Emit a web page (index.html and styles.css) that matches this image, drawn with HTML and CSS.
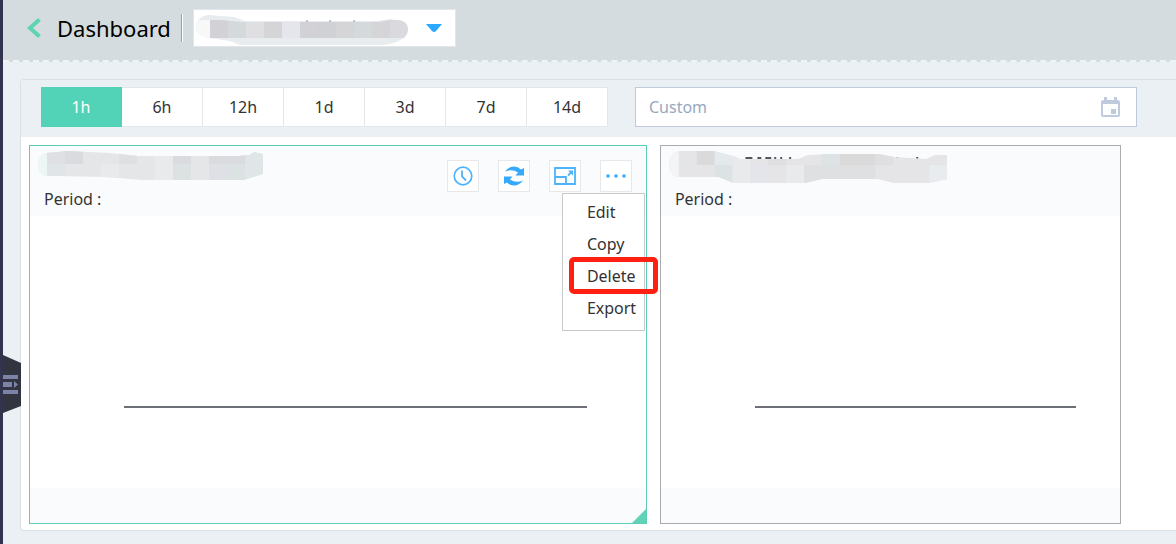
FILE: index.html
```html
<!DOCTYPE html>
<html lang="en">
<head>
<meta charset="utf-8">
<title>Dashboard</title>
<link rel="stylesheet" href="styles.css">
</head>
<body>
<div class="app">
  <aside class="rail">
    <button class="rail-toggle" type="button" aria-label="Expand navigation">
      <svg width="18" height="58" viewBox="0 0 18 58"><path d="M0 0 18 8V51L0 58Z" fill="#32353f"/><path d="M0 20H15V24H0ZM0 27H9V32H0ZM11 26 15 29.500 11 33ZM0 35H15V39H0Z" fill="#7b83a8"/></svg>
    </button>
  </aside>
  <main class="main">
    <header class="header">
      <a class="back" href="#" aria-label="Back"><svg width="14" height="20" viewBox="0 0 14 20"><path d="M12.500 1.500 3 10l9.500 8.500" fill="none" stroke="#5fd3b5" stroke-width="4"/></svg></a>
      <h1 class="title">Dashboard</h1>
      <div class="picker">
        <select class="picker-select" aria-label="Dashboard name"><option></option></select>
        <svg class="picker-mask" width="213" height="31" viewBox="0 0 213 31">
          <defs><clipPath id="m0"><path d="M14 5Q0 5 0 16Q0 28 14 28H177L192 29Q212 27 212 15Q212 6 198 5L184 8H46Z"/></clipPath></defs>
          <path d="M12 1 38 3 49 7H180L195 5Q212 7 212 17Q207 30 185 31H44L34 27 14 24Q0 22 0 13Q0 3 12 1Z" fill="#e8ecee"/>
          <path d="M2 6H14V24Q0 22 0 13Q0 9 2 6Z" fill="#f8f8f9"/>
          <g clip-path="url(#m0)"><path d="M14 6h18v18H14zM104 6h18v18h-18z" fill="#d1d1d6"/><path d="M32 6h18v18H32zM158 6h18v18h-18z" fill="#d4dadc"/><path d="M50 6h18v18H50z" fill="#dfdee1"/><path d="M68 6h18v18H68zM140 6h18v18h-18zM176 6h18v18h-18z" fill="#d5d5d8"/><path d="M86 6h18v18H86z" fill="#e4e6eb"/><path d="M122 6h18v18h-18z" fill="#cfd1d5"/><path d="M194 6h18v18h-18z" fill="#dadade"/></g>
          <path d="M110 7h2M133 7h2M157 7h2" stroke="#8b9199"/>
        </svg>
        <svg class="picker-caret" width="16" height="8" viewBox="0 0 16 8"><path d="M0 0H16L10 7Q8 9 6 7Z" fill="#2ba8ff"/></svg>
      </div>
    </header>
    <section class="panel">
      <div class="toolbar">
        <div class="ranges">
          <button class="range range-active" type="button">1h</button>
          <button class="range" type="button">6h</button>
          <button class="range" type="button">12h</button>
          <button class="range" type="button">1d</button>
          <button class="range" type="button">3d</button>
          <button class="range" type="button">7d</button>
          <button class="range" type="button">14d</button>
        </div>
        <div class="custom">
          <input class="custom-input" type="text" placeholder="Custom" aria-label="Custom">
          <svg width="19" height="20" viewBox="0 0 19 20"><path fill-rule="evenodd" d="M3 0H6V3H13V0H16V3Q19 3 19 5V18Q19 20 17 20H2Q0 20 0 18V5Q0 3 3 3ZM2 7V18H17V7ZM10 12H15V17H10Z" fill="#bfcbdc"/></svg>
        </div>
      </div>
      <div class="cards">
        <article class="card card-selected">
          <div class="card-head">
            <div class="card-info">
              <svg class="mask" width="225" height="30" viewBox="0 0 225 30">
                <defs><clipPath id="m1"><path d="M8 2 30 0 72 2 100 5H200L211 4 216 1 225 3V23L215 26 206 29H104L68 26 20 25H8Q0 23 0 14Q0 5 8 2Z"/></clipPath></defs>
                <g clip-path="url(#m1)"><path d="M0 0h225v30H0z" fill="#e5e6e8"/><path d="M0 0h9v30H0z" fill="#ecf6f4"/><path d="M9 0h18v13H9zM81 0h18v13H81z" fill="#dfe0e3"/><path d="M27 0h18v13H27zM135 0h18v13h-18zM171 0h36v13h-36z" fill="#dadbdf"/><path d="M9 13h18v17H9zM207 0h18v30h-18z" fill="#e0e5e7"/><path d="M63 13h18v17H63zM117 0h18v30h-18z" fill="#e8eaec"/><path d="M135 13h18v17h-18zM189 13h18v17h-18z" fill="#dce1e2"/><path d="M171 13h18v17h-18z" fill="#dfe0e5"/></g>
              </svg>
              <p class="period">Period :</p>
            </div>
            <div class="actions">
              <button class="action" type="button" aria-label="Time"><svg width="20" height="20" viewBox="0 0 20 20" fill="none" stroke="#4db3fb"><circle cx="10" cy="10" r="8.800" stroke-width="1.700"/><path d="M9 4.500V10.500L13 14.500" stroke-width="1.800"/></svg></button>
              <button class="action" type="button" aria-label="Refresh"><svg width="20" height="20" viewBox="0 0 20 20" fill="#35a9fc"><path d="M1 5.500Q5 .5 10 .5Q14 .5 17 3.500L20 2V9.500H11.500L14 6.500Q8 2.500 1 5.500Z"/><path d="M19 14.500Q15 19.500 10 19.500Q6 19.500 3 16.500L0 18V10.500H8.500L6 13.500Q12 17.500 19 14.500Z"/></svg></button>
              <button class="action" type="button" aria-label="Full screen"><svg width="22" height="18" viewBox="0 0 22 18" fill="none" stroke="#4db3fb" stroke-width="1.800"><path d="M1 1H21V17H1ZM1 10H12V17"/><path d="M14 8.500 18 4.500"/><path d="M14 3.500H19V8.500Z" fill="#4db3fb" stroke="none"/></svg></button>
              <div class="more">
                <button class="action" type="button" aria-label="More"><svg width="20" height="4" viewBox="0 0 20 4" fill="#35a9fc"><circle cx="2" cy="2" r="1.800"/><circle cx="10" cy="2" r="1.800"/><circle cx="18" cy="2" r="1.800"/></svg></button>
                <div class="menu">
                  <button class="menu-item" type="button">Edit</button>
                  <button class="menu-item" type="button">Copy</button>
                  <button class="menu-item menu-marked" type="button">Delete</button>
                  <button class="menu-item" type="button">Export</button>
                </div>
              </div>
            </div>
          </div>
          <div class="chart"><div class="axis"></div></div>
          <div class="card-foot"><svg class="grip" width="14" height="14" viewBox="0 0 14 14"><path d="M14 0V14H0Z" fill="#5fd3b5"/></svg></div>
        </article>
        <article class="card">
          <div class="card-head">
            <div class="card-info">
              <svg class="mask" width="278" height="33" viewBox="0 0 280 33">
                <defs><clipPath id="m2"><path d="M10 0H45L68 6 71 8H130L140 4 160 3H212L226 6 259 8 268 4H280V28L262 32H226L210 28H154L137 32H65L50 26H8Q0 23 0 14Q0 2 10 0Z"/></clipPath></defs>
                <path d="M77 7h7M89 7h4M97 7h6M106 7h2M112 7h2M121 7h2M229 7h2M249 7h2" stroke="#555961" stroke-width="2"/>
                <g clip-path="url(#m2)"><path d="M0 0h280v33H0z" fill="#e5e5e7"/><path d="M0 0h10v33H0z" fill="#f3f4f6"/><path d="M28 0h18v14H28zM172 0h36v14h-36z" fill="#dadadb"/><path d="M46 0h18v14H46z" fill="#e4e9ed"/><path d="M46 14h18v19H46zM154 0h18v14h-18z" fill="#dde2e5"/><path d="M64 0h18v33H64zM118 14h18v19h-18z" fill="#e9eaec"/><path d="M100 0h18v14h-18zM208 0h18v14h-18z" fill="#dfdfe2"/><path d="M82 14h18v19H82z" fill="#e4e5ea"/><path d="M136 14h72v19h-72z" fill="#dfe0e1"/><path d="M262 14h18v19h-18z" fill="#e8ecef"/></g>
              </svg>
              <p class="period">Period :</p>
            </div>
          </div>
          <div class="chart"><div class="axis"></div></div>
          <div class="card-foot"></div>
        </article>
      </div>
    </section>
  </main>
</div>
</body>
</html>
```
FILE: styles.css
```css
* { box-sizing: border-box; }
body { margin: 0; background: #eaf0f4; color: #333; font: 16px/24px "Noto Sans", "Open Sans", sans-serif; }
button, input, select { font: inherit; color: inherit; margin: 0; }
button { padding: 0; background: none; border: 0; cursor: pointer; }
svg { display: block; flex: none; }
.app { display: flex; min-height: 100vh; }
.rail { position: relative; flex: none; width: 3px; background: #32334c; }
.rail-toggle { position: absolute; top: 355px; left: 3px; z-index: 2; }
.main { flex: 1; min-width: 0; }
.header { display: flex; align-items: center; height: 62px; padding: 0 24px 4px; background: #d5dcdf; border-bottom: 2px dashed #eef3f6; }
.title { margin: 0 0 0 16px; padding-right: 10px; color: #000; font-size: 22px; font-weight: 400; line-height: 28px; border-right: 1px solid #9a9fa3; box-shadow: 1px 0 #fff; }
.picker { position: relative; width: 263px; height: 38px; margin-left: 11px; }
.picker-select { width: 100%; height: 100%; padding: 0 40px 0 12px; appearance: none; background: #fff; border: 1px solid #e3e6e8; border-radius: 0; }
.picker-mask { position: absolute; top: 5px; left: 3px; pointer-events: none; }
.picker-caret { position: absolute; top: 15px; right: 14px; pointer-events: none; }
.panel { margin: 17px 0 13px 17px; background: #fff; border: solid #d9e0e5; border-width: 1px 0 1px 1px; border-radius: 4px 0 0 4px; }
.toolbar { display: flex; gap: 27px; padding: 7px 39px 10px 20px; background: #eaf0f4; }
.ranges { display: flex; }
.range { width: 81px; height: 40px; background: #fff; border: solid #e4e7e9; border-width: 1px 1px 1px 0; }
.range-active { background: #52d3b7; border-color: #52d3b7; color: #fff; }
.custom { display: flex; flex: 1; align-items: center; min-width: 120px; height: 40px; padding: 0 16px 0 13px; background: #fff; border: 1px solid #bfcbdc; }
.custom-input { flex: 1; min-width: 0; padding: 0; background: none; border: 0; outline: 0; }
.custom-input::placeholder { color: #97a8be; opacity: 1; }
.cards { display: grid; grid-template-columns: 67fr 50fr; gap: 13px; padding: 8px 55px 6px 8px; }
.card { min-width: 0; border: 1px solid #a9abae; }
.card-selected { border-color: #5ecdb5; }
.card-head { display: flex; justify-content: space-between; height: 70px; padding: 5px 14px 0 8px; background: #fafbfd; }
.card-info { display: flex; flex-direction: column; justify-content: space-between; padding-bottom: 5px; }
.period { margin: 0 0 0 6px; }
.actions { display: flex; gap: 19px; padding-top: 9px; }
.action { display: grid; place-items: center; width: 32px; height: 32px; background: #fff; border: 1px solid #e6e8ea; }
.more { position: relative; }
.menu { position: absolute; top: 33px; right: -13px; z-index: 1; width: 83px; padding: 2px 0 6px; background: #fff; border: 1px solid #c7c9cb; }
.menu-item { display: block; width: 100%; height: 32px; padding-left: 24px; text-align: left; white-space: nowrap; }
.menu-marked { position: relative; }
.menu-marked::after { content: ""; position: absolute; inset: -3px -14px -2px 6px; border: 5px solid #ff2012; border-radius: 5px; }
.chart { height: 272px; padding: 190px 9.5% 0 94px; }
.axis { height: 2px; background: #6e7079; }
.card-foot { display: flex; align-items: flex-end; justify-content: flex-end; height: 35px; background: #fafbfd; }
```
